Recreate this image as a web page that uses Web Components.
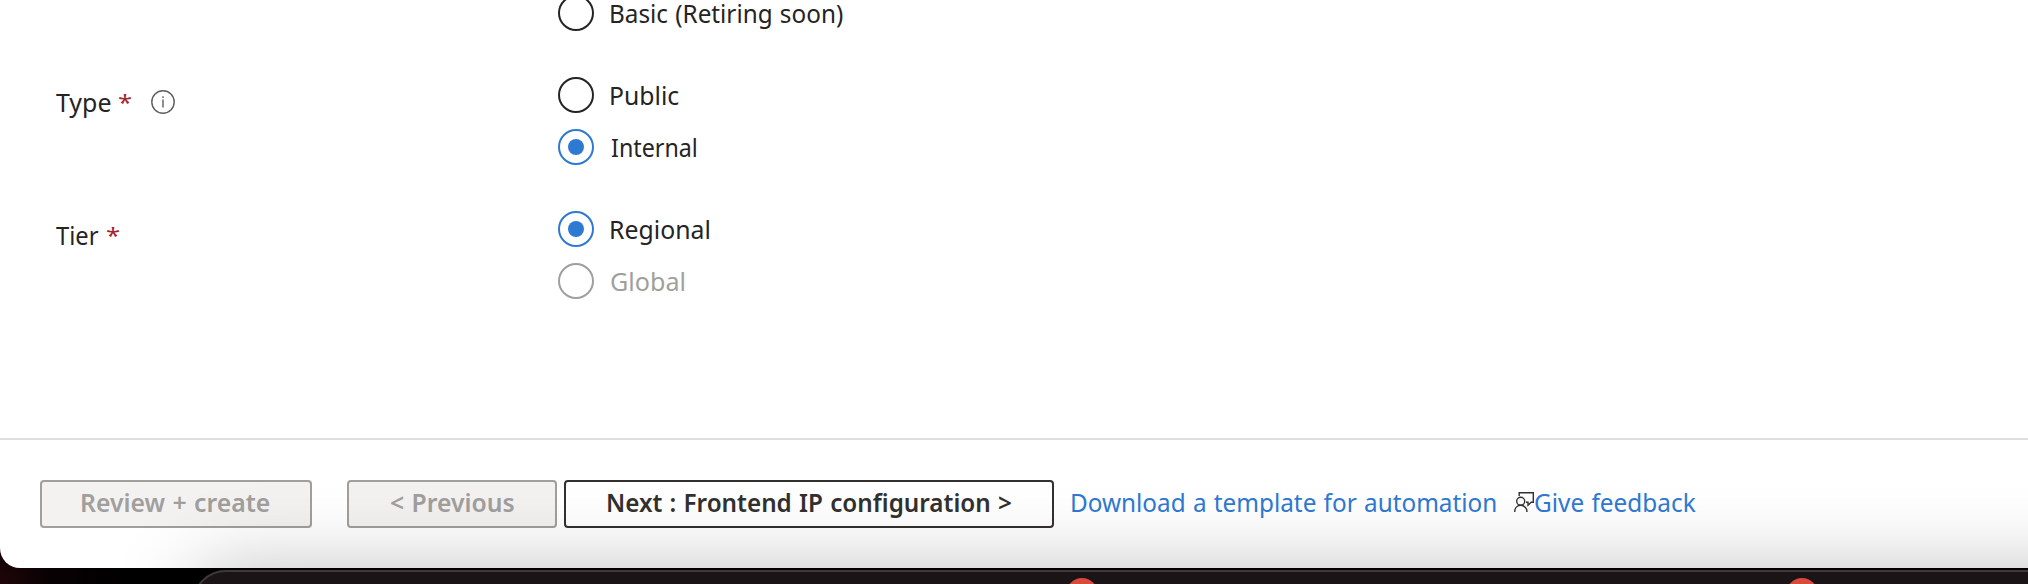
<!DOCTYPE html>
<html lang="en">
<head>
<meta charset="utf-8">
<title>Create load balancer</title>
<style>
html, body { margin: 0; height: 584px; overflow: hidden; }
body { font-family: "Noto Sans", "Open Sans", sans-serif; font-size: 25.5px; color: #252423; background: #020001; }
</style>
</head>
<body>
<portal-desktop>
  <portal-window>
    <form-row style="height:31px">
      <radio-option slot="options" label="Basic (Retiring soon)" ink="231"></radio-option>
    </form-row>
    <form-row style="height:88px; margin-top:51px">
      <field-label slot="label" text="Type" ink="54" info style="padding-top:7px"></field-label>
      <radio-option slot="options" label="Public" ink="67"></radio-option>
      <radio-option slot="options" label="Internal" ink="84" checked></radio-option>
    </form-row>
    <form-row style="height:88px; margin-top:46px">
      <field-label slot="label" text="Tier" ink="42" style="padding-top:6px"></field-label>
      <radio-option slot="options" label="Regional" ink="97.5" checked></radio-option>
      <radio-option slot="options" label="Global" ink="72.5" disabled></radio-option>
    </form-row>
    <wizard-footer slot="footer">
      <wizard-button label="Review + create" ink="187" disabled style="width:272px"></wizard-button>
      <wizard-button label="&lt; Previous" ink="122.5" disabled style="width:210px;margin-left:35px"></wizard-button>
      <wizard-button label="Next : Frontend IP configuration &gt;" ink="402.5" style="width:490px;margin-left:7px"></wizard-button>
      <link-text label="Download a template for automation" ink="423" style="margin-left:18.5px"></link-text>
      <link-text label="Give feedback" ink="160" icon style="margin-left:18.5px"></link-text>
    </wizard-footer>
  </portal-window>
  <app-dock slot="dock"></app-dock>
</portal-desktop>
<script>
// Base class: clones markup and styles into an open shadow root.
class Base extends HTMLElement {
  connectedCallback() {
    if (this.shadowRoot) return;
    this.attachShadow({ mode: 'open' }).innerHTML = this.render();
    this.ready();
  }
  ready() {}
  attr(name) { return (this.getAttribute(name) || '').replace(/&/g, '&amp;').replace(/</g, '&lt;'); }
}
const measure = document.createElement('canvas').getContext('2d');

// One line of text set so its visible glyphs span exactly `ink` pixels.
customElements.define('fit-text', class extends Base {
  render() {
    return `<style>:host{display:block;flex:none;white-space:pre;line-height:36px;word-spacing:1px}
      span{display:block;width:max-content;transform-origin:0 0}</style><span>${this.attr('text')}</span>`;
  }
  ready() {
    const span = this.shadowRoot.querySelector('span'), cs = getComputedStyle(this);
    // Measured at ten times the size, for sub-pixel bearings.
    measure.font = `${cs.fontWeight} ${parseFloat(cs.fontSize) * 10}px ${cs.fontFamily}`;
    measure.wordSpacing = '10px';
    const m = measure.measureText(this.getAttribute('text')), ink = +this.getAttribute('ink');
    const left = m.actualBoundingBoxLeft / 10, right = m.actualBoundingBoxRight / 10;
    const s = ink / (left + right);
    this.style.width = ink + 'px';
    span.style.transform = `scaleX(${s})`;
    span.style.marginLeft = left * s + 'px';
  }
});

customElements.define('radio-option', class extends Base {
  render() {
    return `<style>
      :host{display:flex;align-items:center;gap:17.7px;height:36px;--c:#252423}
      :host([checked]){--c:#2e79d2} :host([disabled]){--c:#a19f9d;color:#a19f9d}
      i{box-sizing:border-box;width:36px;height:36px;border:2px solid var(--c);border-radius:50%;display:grid;place-items:center;flex:none}
      :host([checked]) i::after{content:"";width:16px;height:16px;border-radius:50%;background:var(--c)}
      </style><i></i><fit-text text="${this.attr('label')}" ink="${this.attr('ink')}"></fit-text>`;
  }
});

customElements.define('field-label', class extends Base {
  render() {
    return `<style>
      :host{display:flex;align-items:center;height:36px}
      .star{color:#a4262c;margin:-2px 0 0 8.5px;font-size:22px}
      svg{margin-left:20px;display:block}</style>
      <fit-text text="${this.attr('text')}" ink="${this.attr('ink')}"></fit-text>
      <fit-text class="star" text="*" ink="12"></fit-text>
      ${this.hasAttribute('info') ? `<svg width="24" height="24" viewBox="0 0 24 24" fill="none" stroke="#605e5c" stroke-width="1.4"><circle cx="12" cy="12" r="11.2"/><path d="M12 9.4V17.6M12 6.2V8"/></svg>` : ''}`;
  }
});

customElements.define('form-row', class extends Base {
  render() {
    return `<style>:host{display:grid;grid-template-columns:501.5px 1fr;align-items:start}
      div{display:flex;flex-direction:column;gap:16px}</style>
      <slot name="label"><span></span></slot><div><slot name="options"></slot></div>`;
  }
});

customElements.define('wizard-button', class extends Base {
  render() {
    return `<style>
      :host{box-sizing:border-box;display:flex;justify-content:center;align-items:center;height:48px;padding-bottom:4px;
        border:2px solid #323130;border-radius:4px;background:#fff;color:#323130;font-weight:600}
      :host([disabled]){background:#f3f2f1;border-color:#a19f9d;color:#a19f9d}
      </style><fit-text text="${this.attr('label')}" ink="${this.attr('ink')}"></fit-text>`;
  }
});

customElements.define('link-text', class extends Base {
  render() {
    return `<style>:host{display:flex;height:44px;align-items:center;color:#2e79d2} svg{display:block;margin:0 1px 0 0}</style>
      ${this.hasAttribute('icon') ? `<svg width="20" height="20" viewBox="0 0 20 20" fill="none" stroke="#323130" stroke-width="1.4"><path d="M5.2 4V.7H19.3V10.2H17.2L14 13.2V10.2H12"/><circle cx="6.7" cy="9.3" r="4"/><path d="M.7 20C.7 16 3.2 13.3 6.7 13.3S13 16 13 20"/></svg>` : ''}
      <fit-text text="${this.attr('label')}" ink="${this.attr('ink')}"></fit-text>`;
  }
});

customElements.define('wizard-footer', class extends Base {
  render() {
    return `<style>:host{box-sizing:border-box;display:flex;align-items:flex-start;height:130px;border-top:2px solid #dedede;padding:40px 0 0 40px}</style><slot></slot>`;
  }
});

customElements.define('portal-window', class extends Base {
  render() {
    return `<style>:host{display:flex;flex-direction:column;height:568px;background:#fff;border-radius:0 0 0 20px;overflow:hidden}
      main{flex:1;min-height:0;padding-left:56.5px;margin-top:-5px}</style>
      <main><slot></slot></main><slot name="footer"></slot>`;
  }
});

// The dock floats over the desktop and casts its shadow on the window.
customElements.define('app-dock', class extends Base {
  render() {
    return `<style>
      :host{position:absolute;left:192px;right:-200px;top:570px;height:90px;box-sizing:border-box;
        border:2px solid #3d393b;border-radius:34px;background:#1a1416;box-shadow:0 0 80px rgba(0,0,0,.25)}
      i{position:absolute;top:6px;width:32px;height:32px;border-radius:50%;background:#d94a3b}</style>
      <i style="left:872px"></i><i style="left:1592px"></i>`;
  }
});

customElements.define('portal-desktop', class extends Base {
  render() {
    return `<style>:host{display:block;position:relative;width:2028px;height:584px;overflow:hidden;
      background:radial-gradient(circle at 0 584px,#200509 0,#080103 50px,#020001 110px)}
      </style><slot></slot><slot name="dock"></slot>`;
  }
});
</script>
</body>
</html>
